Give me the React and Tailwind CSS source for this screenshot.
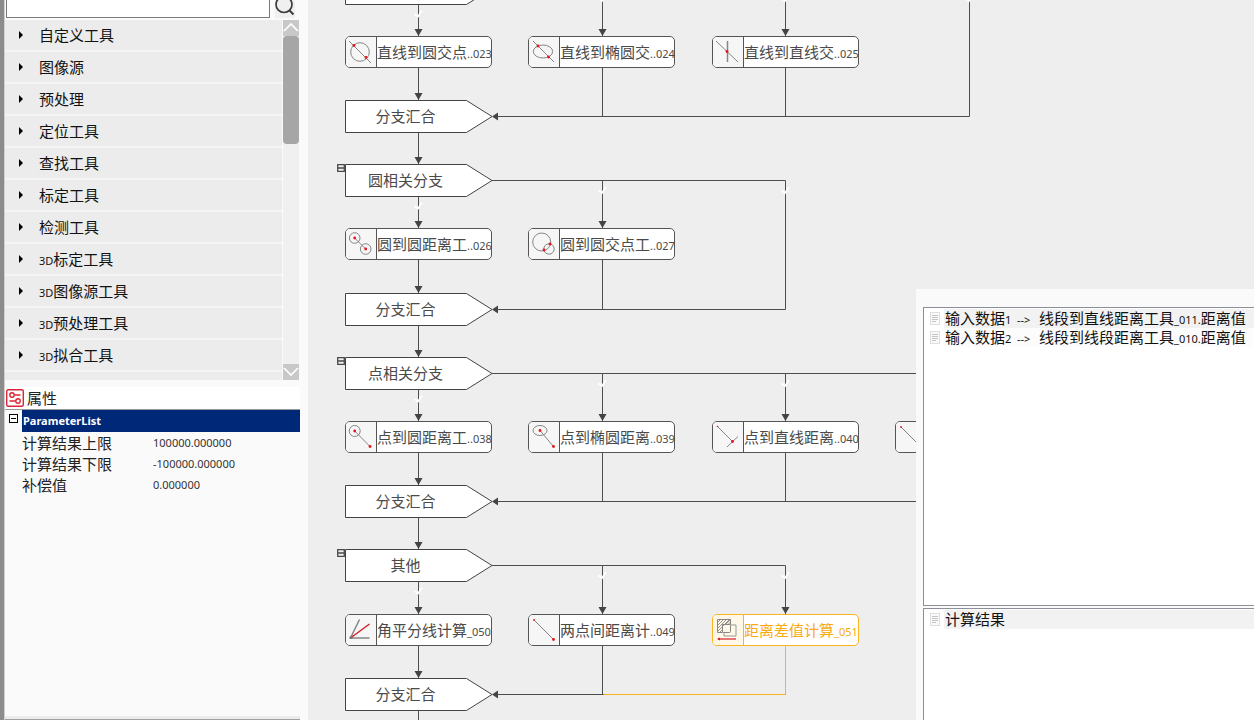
import React from "react";

const TOOLS = [
  "自定义工具",
  "图像源",
  "预处理",
  "定位工具",
  "查找工具",
  "标定工具",
  "检测工具",
  "3D标定工具",
  "3D图像源工具",
  "3D预处理工具",
  "3D拟合工具",
  "",
];

const PARAMS = [
  ["计算结果上限", "100000.000000"],
  ["计算结果下限", "-100000.000000"],
  ["补偿值", "0.000000"],
];

const INPUTS = [
  "输入数据1  -->   线段到直线距离工具_011.距离值",
  "输入数据2  -->   线段到线段距离工具_010.距离值",
];

// Horizontal centres of the flow columns on the canvas.
const COLS = [110.5, 294.5, 477.5, 661.5];
const NODE_LEFT = [37, 220, 404, 587];

const GROUPS = [
  {
    branch: -28, node: 36, merge: 100, last: 3, label: "",
    nodes: [["直线到圆交点..023", "lineCircle"], ["直线到椭圆交..024", "lineEllipse"], ["直线到直线交..025", "lineLine"]],
  },
  {
    branch: 164, node: 228, merge: 293, last: 2, label: "圆相关分支",
    nodes: [["圆到圆距离工..026", "circleDist"], ["圆到圆交点工..027", "circleCross"]],
  },
  {
    branch: 357, node: 421, merge: 485, last: 3, label: "点相关分支",
    nodes: [["点到圆距离工..038", "pointCircle"], ["点到椭圆距离..039", "pointEllipse"], ["点到直线距离..040", "pointLine"], ["", "twoPoint"]],
  },
  {
    branch: 549, node: 614, merge: 678, last: 2, label: "其他", active: 2,
    nodes: [["角平分线计算_050", "bisector"], ["两点间距离计..049", "twoPoint"], ["距离差值计算_051", "difference"]],
  },
];

// Latin letters and digits are set smaller than the Chinese glyphs.
function Mixed({ text }) {
  return text.split(/([\x00-\x7f]+)/).map((part, i) =>
    i % 2 ? <span key={i} className="text-[11px]">{part}</span> : part
  );
}

function Dot({ x, y }) {
  return <circle cx={x} cy={y} r="1.4" fill="#e8141c" stroke="none" />;
}

const ICONS = {
  lineCircle: <><circle cx="15" cy="16" r="9.3" /><path d="M4 5 26 27" /><Dot x={9} y={9.5} /><Dot x={21} y={21.5} /></>,
  lineEllipse: <><ellipse cx="15" cy="15.5" rx="9.7" ry="6.5" /><path d="M5 5 26 26" /><Dot x={10} y={10} /><Dot x={20.5} y={21} /></>,
  lineLine: <><path d="M4 5 26 26" /><path d="M15.5 5V26" strokeWidth="1.5" /><Dot x={15} y={15.5} /></>,
  circleDist: <><circle cx="9.7" cy="10" r="5.3" /><circle cx="20.7" cy="21" r="5.3" /><path d="M9.7 10 20.7 21" /><Dot x={9.7} y={10} /><Dot x={20.7} y={21} /></>,
  circleCross: <><circle cx="13.7" cy="14" r="9" /><circle cx="21" cy="21" r="5.2" /><Dot x={22} y={16} /><Dot x={16} y={22} /></>,
  pointCircle: <><circle cx="9.7" cy="10" r="5.5" /><path d="M9.7 10 25 25.5" /><Dot x={9.7} y={10} /><Dot x={25} y={25.5} /></>,
  pointEllipse: <><ellipse cx="12" cy="9.5" rx="7" ry="5" /><path d="M12 9.5 25.5 25.5" /><Dot x={12} y={9.5} /><Dot x={25.5} y={25.5} /></>,
  pointLine: <><path d="M5.5 5.5 20.5 20.5M15 26 26 15.5" /><circle cx="5.5" cy="5.5" r="0.8" fill="#e8141c" stroke="none" /><Dot x={20.5} y={20.5} /></>,
  twoPoint: <><path d="M6 6 26 26" /><circle cx="6" cy="6" r="0.9" fill="#e8141c" stroke="none" /><Dot x={25.5} y={25.5} /></>,
  bisector: <><path d="M24.500 24H5.500L14.500 5.500" strokeWidth="1.5" /><path d="M5.500 24 24.500 10" stroke="#d6202a" strokeWidth="1.5" /><circle cx="6" cy="23.500" r="1.500" fill="#777" stroke="none" /></>,
  difference: (
    <>
      <path d="M5.500 5.500H18.500V10.500H10.500V18.500H5.500Z" />
      <path d="M5.500 8.500 8.500 5.500M5.500 11.500 11.500 5.500M5.500 14.500 14.500 5.500M5.500 17.500 17.500 5.500M7.500 18.500 10.500 15.500M13.500 10.500 18.500 5.500M16 10.500 18.500 8" strokeWidth="0.9" />
      <rect x="10.500" y="10.500" width="8" height="8" rx="1" />
      <path d="M18.500 11H24V22H12V18.500" stroke="#999" />
      <path d="M6 25H24" stroke="#d6202a" strokeWidth="1.2" />
      <path d="M5 25 8 23.500V26.500Z" fill="#d6202a" stroke="none" />
    </>
  ),
};

function FlowNode({ x, y, text, icon, active }) {
  return (
    <div
      className={
        "absolute flex h-8 w-[147px] rounded-[5px] border bg-white " +
        (active ? "border-[#f9b420] text-[#f9ab10]" : "border-[#555] text-[#4a4a4a]")
      }
      style={{ left: x, top: y }}
    >
      <div
        className={
          "flex w-[31px] shrink-0 rounded-l-[4px] border-r " +
          (active ? "border-[#f9b420] bg-[#fff8e8]" : "border-[#555] bg-[#f6f6f6]")
        }
      >
        <svg viewBox="1 1 30 30" className="size-[30px]" fill="none" stroke="#868686" strokeWidth="1">
          {ICONS[icon]}
        </svg>
      </div>
      <span className="self-center whitespace-nowrap pt-0.5 text-[15px] leading-5">
        <Mixed text={text} />
      </span>
    </div>
  );
}

function Pentagon({ y, text, collapsible }) {
  return (
    <div className="absolute h-[33px] w-[148px]" style={{ left: 37, top: y }}>
      <svg viewBox="0 0 148 33" className="absolute inset-0 size-full">
        <path d="M0.500 0.500H121.500L147 16.500 121.500 32.500H0.500Z" fill="#fff" stroke="#444" />
      </svg>
      {text && (
        <span className="relative flex h-full w-[121px] items-center justify-center text-[15px] text-[#4a4a4a]">
          {text}
        </span>
      )}
      {collapsible && (
        <button type="button" aria-label={"折叠" + text} className="absolute -left-2 top-0">
          <svg viewBox="0 0 8 8" className="block size-2">
            <path d="M0.700 0.700H7.300V7.300H0.700ZM1 4H7" fill="#eee" stroke="#4a4a4a" strokeWidth="1.3" />
          </svg>
        </button>
      )}
    </div>
  );
}

function Down({ x, y }) {
  return <path d={`M${x - 4} ${y - 6}H${x + 4}L${x} ${y + 1}Z`} fill="#444" />;
}

function Tick({ x, y }) {
  return <path d={`M${x - 4} ${y}L${x - 0.5} ${y + 2.5} ${x + 3.5} ${y - 3.5}`} fill="none" stroke="#fff" strokeWidth="1.8" />;
}

function Edges() {
  return (
    <svg className="absolute inset-0 size-full" aria-hidden="true">
      {GROUPS.map((g, gi) => {
        const by = g.branch + 16.5;
        const my = g.merge + 16.5;
        const right = COLS[g.last] + (gi === 2 ? 184 : 0);
        const next = g.merge + 64;
        return (
          <g key={gi} fill="none" stroke="#4d4d4d">
            <path d={`M184 ${by}H${right}M190 ${my}H${right}`} />
            <path d={`M${COLS[0]} ${g.branch + 33}V${g.node}M${COLS[0]} ${g.node + 32}V${g.merge}M${COLS[0]} ${g.merge + 33}V${next}`} />
            {COLS.slice(1, g.last + 1).map((x) => (
              <path key={x} d={`M${x} ${by}V${my}`} />
            ))}
            {g.active && (
              <path d={`M${COLS[1] + 1} ${my}H${COLS[2]}V${g.node + 30}`} stroke="#f9b420" />
            )}
            <g stroke="none">
              <Down x={COLS[0]} y={g.merge - 1} />
              <Down x={COLS[0]} y={next - 1} />
              {g.nodes.map((n, i) => <Down key={i} x={COLS[i]} y={g.node - 1} />)}
              <path d={`M184 ${my}L190 ${my - 4}V${my + 4}Z`} fill="#444" />
            </g>
            <Tick x={COLS[0]} y={g.branch + 42} />
            {COLS.slice(1, g.last + 1).map((x) => <Tick key={x} x={x} y={by + 10} />)}
          </g>
        );
      })}
    </svg>
  );
}

function PageIcon() {
  return (
    <svg viewBox="0 0 12 14" className="h-[14px] w-3 shrink-0" fill="none" stroke="#c4c4c4">
      <rect x="1.500" y="0.500" width="9" height="12" fill="#fafafa" stroke="#dedede" />
      <path d="M3 3.500H9M3 5.500H9M3 7.500H9M3 9.500H7" />
    </svg>
  );
}

function DataRow({ text, shade }) {
  return (
    <li className="flex h-[19px] items-center">
      <span className="flex w-5 shrink-0 justify-center pl-0.5"><PageIcon /></span>
      <span className={"h-full flex-1 whitespace-pre pl-px text-[15px] leading-[19px] text-[#111] " + shade}>
        <Mixed text={text} />
      </span>
    </li>
  );
}

function Chevron({ d }) {
  return (
    <svg viewBox="0 0 16 16" className="size-4" fill="none" stroke="#fff" strokeWidth="1.7">
      <path d={d} />
    </svg>
  );
}

function Sidebar() {
  return (
    <aside className="flex h-full w-[308px] shrink-0 border-l-4 border-[#8c8c8c] bg-[#fafafa]">
      <div className="flex min-w-0 flex-1 flex-col border-l border-[#d0d0d0]">
        <div className="flex h-5 shrink-0 items-end pb-0.5">
          <input
            type="text"
            aria-label="搜索工具"
            className="ml-px h-[22px] w-[264px] shrink-0 border border-[#7a7a7a] bg-white px-1 text-[13px]"
          />
          <button type="button" aria-label="搜索" className="ml-[5px] flex h-6 w-5 items-center justify-center bg-[#f0f0f0]">
            <svg viewBox="0 0 20 24" className="h-6 w-5" fill="none" stroke="#3c3c3c" strokeWidth="1.7">
              <circle cx="9" cy="10.500" r="8" />
              <path d="M14.500 16.500 18.500 20.500" strokeWidth="2" />
            </svg>
          </button>
        </div>
        <div className="flex h-[360px] shrink-0">
          <ul className="flex w-[277px] flex-col gap-0.5 overflow-hidden bg-[#f5f5f5]">
            {TOOLS.map((t, i) => (
              <li key={i} className="h-[30px] shrink-0 bg-[#ececec]">
                {t && (
                  <button type="button" className="flex h-full w-full items-center gap-4 pl-3.5 text-left text-[15px] text-[#111]">
                    <svg viewBox="0 0 4 8" className="h-2 w-1 shrink-0"><path d="M0 0 4 4 0 8Z" /></svg>
                    <span><Mixed text={t} /></span>
                  </button>
                )}
              </li>
            ))}
          </ul>
          <div className="ml-px flex w-4 flex-col bg-[#f0f0f0]">
            <button type="button" aria-label="向上滚动" className="h-4 bg-[#c8c8c8]"><Chevron d="M1 11 8 4 15 11" /></button>
            <div className="h-[108px] rounded-sm bg-[#a6a6a6]" />
            <button type="button" aria-label="向下滚动" className="mt-auto h-4 bg-[#c8c8c8]"><Chevron d="M1 4 8 11 15 4" /></button>
          </div>
        </div>
        <section className="mt-[7px] flex min-h-0 w-[295px] flex-1 flex-col">
          <h2 className="flex h-[22px] shrink-0 items-center gap-[3px] bg-white pl-px text-[15px] text-[#222]">
            <svg viewBox="0 0 18 18" className="size-[18px]" fill="none" stroke="#dc2438" strokeWidth="1.4">
              <rect x="0.700" y="0.700" width="16.600" height="16.600" rx="1.500" />
              <circle cx="6" cy="6" r="2.200" />
              <path d="M8.500 6H14.500M3.500 12H9.500" />
              <circle cx="12" cy="12" r="2.200" />
            </svg>
            属性
          </h2>
          <div className="flex shrink-0 border-t border-[#999]">
            <div className="w-[17px] shrink-0 pl-1 pt-1">
              <button type="button" aria-label="折叠 ParameterList" className="flex size-[9px] items-center justify-center border border-black bg-white">
                <span className="h-px w-[5px] bg-black" />
              </button>
            </div>
            <table className="w-full table-fixed border-collapse text-left">
              <colgroup>
                <col className="w-[131px]" />
                <col />
              </colgroup>
              <thead>
                <tr className="h-[22px] bg-[#002878]">
                  <th colSpan="2" className="p-0 pl-px text-[11px] font-bold leading-5 text-white">ParameterList</th>
                </tr>
              </thead>
              <tbody>
                {PARAMS.map(([k, v]) => (
                  <tr key={k} className="h-[21px]">
                    <th scope="row" className="p-0 text-[15px] font-normal leading-5 text-[#222]">{k}</th>
                    <td className="p-0 text-[11px] leading-5 text-[#333]">{v}</td>
                  </tr>
                ))}
              </tbody>
            </table>
          </div>
          <div className="mt-auto h-1 w-full shrink-0 border-b border-[#a0a0a0] bg-[#ececec]" />
        </section>
      </div>
    </aside>
  );
}

export default function App() {
  return (
    <div className="flex h-screen w-full overflow-hidden bg-[#eee] font-['Noto_Sans','Noto_Sans_CJK_SC',sans-serif]">
      <Sidebar />
      <main className="relative min-w-0 flex-1 overflow-hidden bg-[#eee]">
        <Edges />
        {GROUPS.map((g, gi) => (
          <React.Fragment key={gi}>
            <Pentagon y={g.branch} text={g.label} collapsible={g.branch >= 0} />
            {g.nodes.map(([text, icon], i) => (
              <FlowNode key={i} x={NODE_LEFT[i]} y={g.node} text={text} icon={icon} active={g.active === i} />
            ))}
            <Pentagon y={g.merge} text="分支汇合" />
          </React.Fragment>
        ))}
        <section className="absolute bottom-0 right-0 flex h-[431px] w-[338px] flex-col bg-[#fafafa] pl-[7px] pt-[18px]">
          <ul className="h-[299px] shrink-0 border border-r-0 border-[#8a8f98] bg-white pt-px">
            <DataRow text={INPUTS[0]} shade="bg-[#f2f2f2]" />
            <DataRow text={INPUTS[1]} shade="bg-[#fcfcfc]" />
          </ul>
          <ul className="mt-0.5 flex-1 border-l border-t border-[#8a8f98] bg-white pt-px">
            <DataRow text="计算结果" shade="bg-[#f2f2f2]" />
          </ul>
        </section>
      </main>
    </div>
  );
}
